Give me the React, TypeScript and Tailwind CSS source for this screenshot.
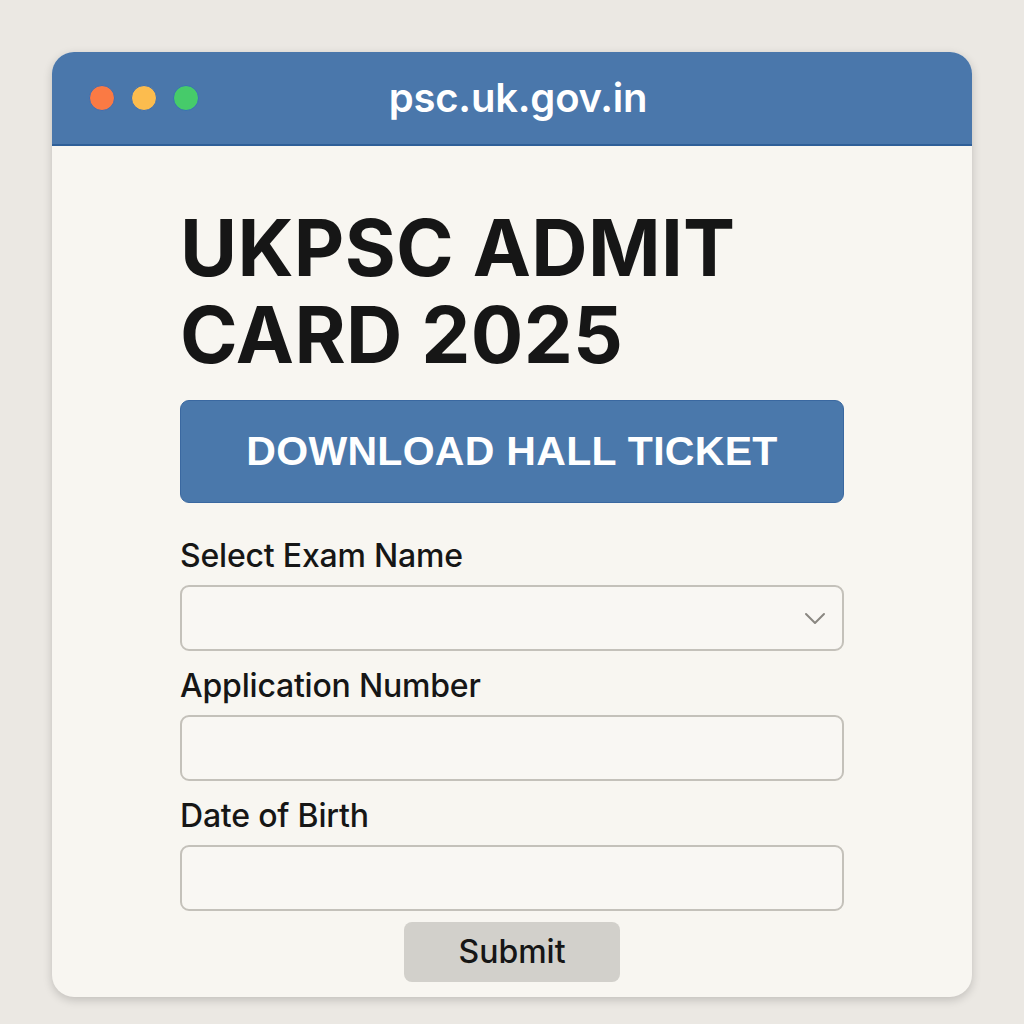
import React from 'react';

const Field: React.FC<{ label: string; select?: boolean }> = ({ label, select }) => (
  <div className="flex flex-col">
    <label className="text-[32px] leading-[38px] font-medium text-[#161616] tracking-[-0.2px]">{label}</label>
    <div className="mt-[10px] h-[66px] rounded-[9px] border-2 border-[#c4c1ba] bg-[#f9f7f3] flex items-center justify-end pr-[16px]">
      {select && (
        <svg width="22" height="14" viewBox="0 0 22 14" fill="none">
          <path d="M2 3l9 9 9-9" stroke="#8a8780" strokeWidth="2" strokeLinecap="round" strokeLinejoin="round" />
        </svg>
      )}
    </div>
  </div>
);

export default function App() {
  return (
    <div className="w-[1024px] h-[1024px] bg-[#ebe8e3] pt-[52px] pl-[52px]" style={{ fontFamily: 'Inter, "Liberation Sans", sans-serif' }}>
      <div className="w-[920px] h-[945px] rounded-[22px] bg-[#f8f6f1] overflow-hidden shadow-[0_3px_10px_rgba(0,0,0,0.18)]">
        {/* Title bar */}
        <div className="h-[94px] bg-[#4a77ab] border-b-2 border-[#2f5f98] flex items-center px-[37px] relative">
          <div className="flex gap-[16px]">
            <span className="w-[26px] h-[26px] rounded-full bg-[#fa7a44] border border-[#3a6fb5]" />
            <span className="w-[26px] h-[26px] rounded-full bg-[#fcbc4e] border border-[#3a6fb5]" />
            <span className="w-[26px] h-[26px] rounded-full bg-[#46cb6a] border border-[#3a6fb5]" />
          </div>
          <div className="absolute inset-0 flex items-center justify-center pl-[12px]">
            <span className="text-white text-[40px] font-semibold tracking-[-0.2px]">psc.uk.gov.in</span>
          </div>
        </div>

        {/* Body */}
        <div className="px-[128px] pt-[58px]">
          <h1 className="text-[78px] leading-[87px] font-bold text-[#161616] tracking-[0.3px]">
            UKPSC ADMIT
            <br />
            CARD 2025
          </h1>
          <button className="mt-[22px] w-[664px] h-[103px] rounded-[9px] bg-[#4a78ab] border border-[#3a68a0] text-white text-[41px] font-semibold tracking-[0.3px]" style={{ fontFamily: '"Liberation Sans", sans-serif' }}>
            DOWNLOAD HALL TICKET
          </button>
          <div className="mt-[34px] w-[664px] flex flex-col gap-[16px]">
            <Field label="Select Exam Name" select />
            <Field label="Application Number" />
            <Field label="Date of Birth" />
          </div>
          <div className="w-[664px] flex justify-center mt-[11px]">
            <button className="w-[216px] h-[60px] rounded-[8px] bg-[#d2d0cb] text-[32px] font-medium text-[#161616]">Submit</button>
          </div>
        </div>
      </div>
    </div>
  );
}
